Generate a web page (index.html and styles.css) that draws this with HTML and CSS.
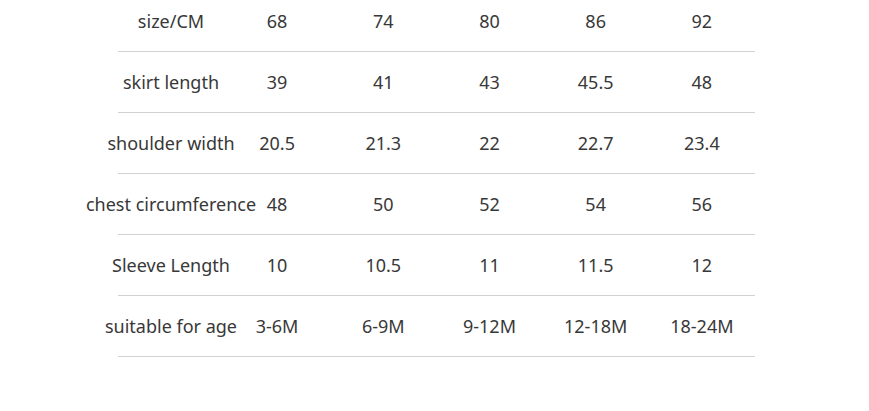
FILE: index.html
```html
<!DOCTYPE html>
<html>
<head>
<meta charset="utf-8">
<link rel="stylesheet" href="styles.css">
</head>
<body>
<table class="size-table">
  <tr><td class="label"><div class="label-text">size/CM</div></td><td>68</td><td>74</td><td>80</td><td>86</td><td>92</td></tr>
  <tr><td class="label"><div class="label-text">skirt length</div></td><td>39</td><td>41</td><td>43</td><td>45.5</td><td>48</td></tr>
  <tr><td class="label"><div class="label-text">shoulder width</div></td><td>20.5</td><td>21.3</td><td>22</td><td>22.7</td><td>23.4</td></tr>
  <tr><td class="label"><div class="label-text">chest circumference</div></td><td>48</td><td>50</td><td>52</td><td>54</td><td>56</td></tr>
  <tr><td class="label"><div class="label-text">Sleeve Length</div></td><td>10</td><td>10.5</td><td>11</td><td>11.5</td><td>12</td></tr>
  <tr><td class="label"><div class="label-text">suitable for age</div></td><td>3-6M</td><td>6-9M</td><td>9-12M</td><td>12-18M</td><td>18-24M</td></tr>
</table>
</body>
</html>
```
FILE: styles.css
```css
html, body {
  margin: 0;
  padding: 0;
  background: #ffffff;
}
body {
  font-family: "Noto Sans", "Open Sans", sans-serif;
  font-size: 18px;
  color: #383838;
  overflow: hidden;
}
.size-table {
  border-collapse: collapse;
  table-layout: fixed;
  width: 637px;
  margin: -9px 0 0 118px;
}
.size-table td {
  height: 60px;
  padding: 0;
  text-align: center;
  vertical-align: middle;
  border-bottom: 1px solid #d2d2d2;
  width: 106.2px;
  white-space: nowrap;
}
.size-table td.label {
  width: 106px;
}
.label-text {
  display: flex;
  justify-content: center;
  width: 106px;
}
```
